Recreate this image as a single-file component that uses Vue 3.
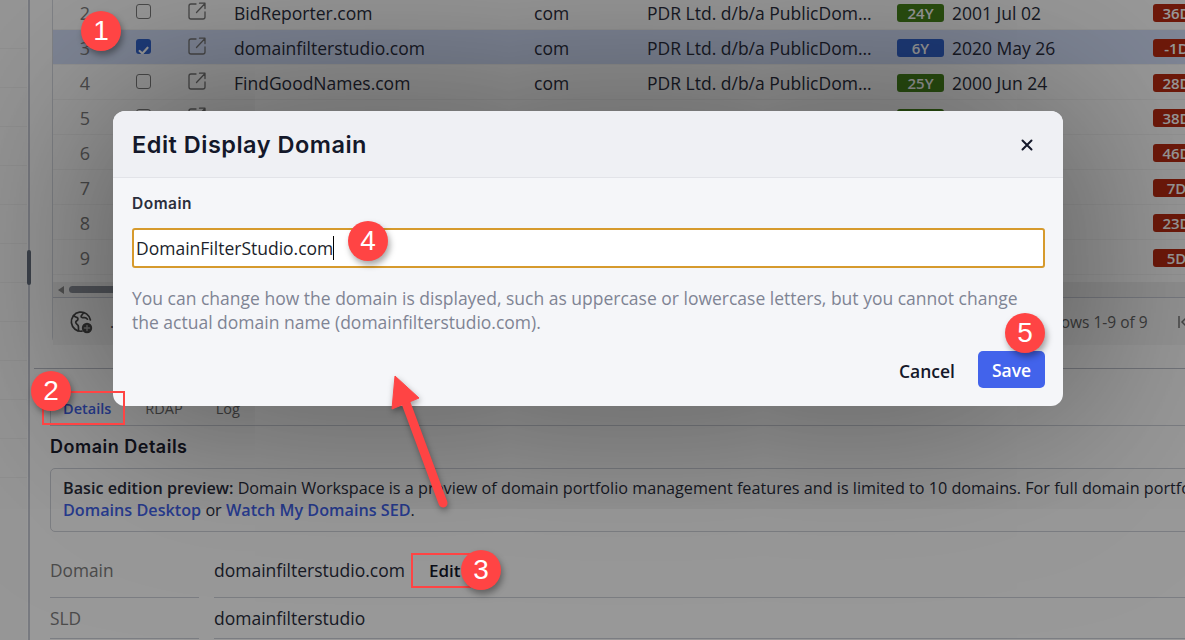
<script setup>
const rows = [
  { n: 2, name: 'BidReporter.com', tld: 'com', reg: 'PDR Ltd. d/b/a PublicDom...', age: '24Y', date: '2001 Jul 02', left: '36D' },
  { n: 3, name: 'domainfilterstudio.com', tld: 'com', reg: 'PDR Ltd. d/b/a PublicDom...', age: '6Y', date: '2020 May 26', left: '-1D', selected: true },
  { n: 4, name: 'FindGoodNames.com', tld: 'com', reg: 'PDR Ltd. d/b/a PublicDom...', age: '25Y', date: '2000 Jun 24', left: '28D' },
  { n: 5, age: '24Y', left: '38D' },
  { n: 6, age: '24Y', left: '46D' },
  { n: 7, age: '24Y', left: '7D' },
  { n: 8, age: '24Y', left: '23D' },
  { n: 9, age: '24Y', left: '5D' }
]

// numbered callouts drawn over the screenshot
const callouts = [
  { n: 1, x: 101, y: 31 },
  { n: 2, x: 51, y: 391 },
  { n: 3, x: 481, y: 570 },
  { n: 4, x: 368, y: 241 },
  { n: 5, x: 1025, y: 333 }
]
</script>

<template>
  <div class="page">
    <aside class="rail">
      <div class="rail-line" v-for="i in 12" :key="i"></div>
    </aside>
    <div class="rail-scroll"><span class="rail-thumb"></span></div>

    <main class="content">
      <section class="grid-card">
        <div class="row" v-for="r in rows" :key="r.n" :class="{ selected: r.selected }">
          <span class="num">{{ r.n }}</span>
          <span class="check-cell">
            <span class="check" :class="{ on: r.selected }">
              <svg v-if="r.selected" viewBox="0 0 14 14" width="15" height="15">
                <path d="M3.400 7.400 6 9.800l4.800-5.400" fill="none" stroke="#fff" stroke-width="2" stroke-linecap="round" stroke-linejoin="round" />
              </svg>
            </span>
          </span>
          <span class="link-cell">
            <svg viewBox="0 0 18 18" width="18" height="18" fill="none" stroke="#777" stroke-width="1.300" stroke-linecap="round" stroke-linejoin="round">
              <path d="M8 2H3a2 2 0 0 0-2 2v11a2 2 0 0 0 2 2h12a2 2 0 0 0 2-2v-5" />
              <path d="M8.500 10.500 17 1.500M11.500 1.200H17v5.400" />
            </svg>
          </span>
          <span class="cell">{{ r.name }}</span>
          <span class="cell">{{ r.tld }}</span>
          <span class="cell">{{ r.reg }}</span>
          <span class="age-cell"><span class="badge" :class="r.selected ? 'blue' : 'green'">{{ r.age }}</span></span>
          <span class="cell">{{ r.date }}</span>
          <span class="left-cell"><span class="badge red">{{ r.left }}</span></span>
        </div>
        <div class="hscroll">
          <span class="hscroll-arrow"></span>
          <span class="hscroll-thumb"></span>
        </div>
        <div class="grid-footer">
          <svg class="globe" viewBox="0 0 24 24" width="24" height="24" fill="none" stroke="#4a4a4a" stroke-width="1.700" stroke-linecap="round" stroke-linejoin="round">
            <path d="M13 21.200A9.600 9.600 0 1 1 21.400 10" />
            <path d="M4.500 5.500c1.500 1 2 1.600 3.200 1.800 1.400.3 1.400 1.600 1 2.600-.4 1-2 1-2 2.400 0 1.400 1.600 2 2.400 3.200.6 1 .4 3 .4 5" />
            <path d="M14.500 2.800c-.6 1.600-2.200 2-2.400 3.400-.2 1.400 1.600 1.600 3 1.400 1.400-.2 2.400.4 3.400 1.600" />
            <circle cx="18" cy="18" r="5.200" fill="#4a4a4a" stroke="none" />
            <path d="M18 15.400v5.200M15.400 18h5.200" stroke="#aaa" stroke-width="1.400" />
          </svg>
          <span class="foot-dot">.</span>
          <span class="foot-rows">Rows 1-9 of 9</span>
          <svg class="foot-first" viewBox="0 0 12 14" width="12" height="14" fill="none" stroke="#777" stroke-width="1.500">
            <path d="M1 1v12M10 1 4 7l6 6" />
          </svg>
        </div>
      </section>

      <section class="lower">
        <nav class="tabs">
          <span class="tab active">Details</span>
          <span class="tab">RDAP</span>
          <span class="tab">Log</span>
        </nav>
        <h2 class="details-title">Domain Details</h2>
        <div class="notice">
          <p><b>Basic edition preview:</b> Domain Workspace is a preview of domain portfolio management features and is limited to 10 domains. For full domain portfolio management, use</p>
          <p><a>Domains Desktop</a> or <a>Watch My Domains SED</a>.</p>
        </div>
        <div class="field first">
          <span class="field-label">Domain</span>
          <span class="field-value">domainfilterstudio.com<span class="edit-btn">Edit</span></span>
        </div>
        <div class="field">
          <span class="field-label">SLD</span>
          <span class="field-value">domainfilterstudio</span>
        </div>
      </section>
    </main>

    <div class="backdrop"></div>

    <div class="modal">
      <header class="modal-head">
        <h1>Edit Display Domain</h1>
        <svg viewBox="0 0 12 12" width="12" height="12" fill="none" stroke="#14182a" stroke-width="2" stroke-linecap="round">
          <path d="M1.500 1.500l9 9M10.500 1.500l-9 9" />
        </svg>
      </header>
      <div class="modal-body">
        <label class="input-label">Domain</label>
        <div class="input"><span>DomainFilterStudio.com</span><i class="caret"></i></div>
        <p class="help">You can change how the domain is displayed, such as uppercase or lowercase letters, but you cannot change the actual domain name (domainfilterstudio.com).</p>
        <div class="actions">
          <button class="cancel">Cancel</button>
          <button class="save">Save</button>
        </div>
      </div>
    </div>

    <span class="mark mark-tab"></span>
    <span class="mark mark-edit"></span>
    <svg class="arrow" viewBox="0 0 1185 640" width="1185" height="640">
      <path d="M406 403 L443 503" stroke="#ff4444" stroke-width="9" stroke-linecap="round" />
      <path d="M395 376 L419 398 L392 409 Z" fill="#ff4444" stroke="#ff4444" stroke-width="1" stroke-linejoin="round" />
    </svg>
    <span
      v-for="c in callouts"
      :key="c.n"
      class="callout"
      :style="{ left: c.x - 20 + 'px', top: c.y - 20 + 'px' }"
    >{{ c.n }}</span>
  </div>
</template>

<style>
body {
  margin: 0;
  overflow: hidden;
}
</style>

<style scoped>
.page {
  position: relative;
  display: flex;
  width: 1185px;
  height: 640px;
  overflow: hidden;
  background: #fff;
  color: #2a2e3d;
  font-family: "Open Sans", "Liberation Sans", sans-serif;
  font-size: 18px;
}

.rail {
  flex: 0 0 27px;
  padding-top: 48px;
  background: #fafafa;
}

.rail-line {
  height: 1px;
  margin-bottom: 38px;
  background: #f0f0f0;
}

.rail-scroll {
  flex: 0 0 4px;
  padding-top: 250px;
  background: linear-gradient(90deg, #fff 1px, #c9ccd6 1px, #c9ccd6 3px, #fff 3px);
}

.rail-thumb {
  display: block;
  width: 4px;
  height: 35px;
  border-radius: 2px;
  background: #67707f;
}

.content {
  flex: 1;
  min-width: 0;
}

.grid-card {
  box-sizing: border-box;
  height: 351px;
  width: 1300px;
  margin: -6px 0 0 21px;
  border: 1px solid #d8dbe2;
  border-radius: 0 0 8px 8px;
}

.row {
  display: grid;
  grid-template-columns: 64px 53px 54px 300px 113px 250px 55px 201px 1fr;
  align-items: center;
  box-sizing: border-box;
  height: 35px;
  padding-top: 1px;
  border-bottom: 1px solid #f6f6f6;
  white-space: nowrap;
}

.row.selected {
  background: #d4dffb;
}

.num {
  text-align: center;
  color: #7d7d7d;
}

.check-cell,
.link-cell {
  display: flex;
  justify-content: center;
}

.link-cell {
  padding-bottom: 4px;
}

.check {
  display: block;
  box-sizing: border-box;
  width: 15px;
  height: 15px;
  margin-bottom: 3px;
  border: 1.5px solid #7e7e7e;
  border-radius: 3px;
  overflow: hidden;
}

.check.on {
  border: 0;
  background: #3264cd;
}

.cell {
  padding-left: 10px;
  font-size: 17.500px;
}

.age-cell,
.left-cell {
  padding-left: 10px;
}

.badge {
  display: block;
  width: 47px;
  height: 18px;
  border-radius: 3px;
  color: #fff;
  font-size: 15px;
  font-weight: 600;
  line-height: 18px;
  text-align: center;
}

.green {
  background: #46841b;
}

.blue {
  background: #3264cd;
}

.red {
  background: #b92b11;
}

.hscroll {
  display: flex;
  align-items: center;
  gap: 5px;
  height: 15px;
  margin-top: 7px;
  padding-left: 5px;
  border-bottom: 1px solid #c9ccd6;
  background: #f0f0f0;
}

.hscroll-arrow {
  border: 4px solid transparent;
  border-right: 6px solid #8a8a8a;
  border-left: 0;
}

.hscroll-thumb {
  width: 600px;
  height: 7px;
  border-radius: 4px;
  background: #8a8f99;
}

.grid-footer {
  display: flex;
  align-items: center;
  height: 47px;
  padding-left: 16px;
  background: #f7f7f7;
  font-size: 15.500px;
  color: #666;
}

.globe {
  flex-shrink: 0;
}

.foot-dot {
  margin-left: 17px;
  color: #444;
}

.foot-rows {
  margin-left: 937px;
  white-space: nowrap;
}

.foot-first {
  flex-shrink: 0;
  margin-left: 30px;
}

.lower {
  margin: 23px 0 0 3px;
  padding-left: 16px;
  border-top: 1px solid #bfc2cc;
  white-space: nowrap;
}

.tabs {
  display: flex;
  height: 33px;
  margin-top: 23px;
  border-bottom: 1px solid #cfd2da;
  font-size: 14.500px;
  color: #6e6e6e;
}

.tab {
  margin-right: 33px;
  line-height: 34px;
}

.tab.active {
  box-sizing: border-box;
  height: 34px;
  margin-right: 22px;
  padding: 0 12px;
  border-left: 1px solid #cfd2da;
  color: #4263eb;
  font-weight: 600;
}

.details-title {
  margin: 10px 0 11px;
  font-family: Inter, "Open Sans", sans-serif;
  font-size: 18px;
  font-weight: 600;
  letter-spacing: 0.5px;
  line-height: 21px;
  color: #1c2030;
}

.notice {
  box-sizing: border-box;
  width: 1300px;
  height: 64px;
  padding: 8px 12px;
  border: 1px solid #cfd2da;
  border-radius: 5px;
  font-size: 16.200px;
  line-height: 22px;
}

.notice p {
  margin: 0;
}

.notice b {
  font-weight: 600;
}

.notice a {
  color: #4263eb;
  font-weight: 600;
}

.field {
  display: flex;
  gap: 15px;
  width: 1300px;
  height: 41px;
  font-size: 17.500px;
}

.field.first {
  height: 66px;
}

.field-label,
.field-value {
  box-sizing: border-box;
  display: flex;
  align-items: center;
  border-bottom: 1px solid #cfd2da;
}

.first .field-label,
.first .field-value {
  padding-top: 11px;
}

.field-label {
  flex: 0 0 149px;
  font-size: 17.300px;
  color: #7d7d7d;
}

.field-value {
  flex: 1;
}

.edit-btn {
  margin-left: 24px;
  font-size: 17px;
  font-weight: 600;
  color: #14182a;
}

.backdrop {
  position: absolute;
  inset: 0;
  background: rgba(0, 0, 0, 0.4);
}

.modal {
  position: absolute;
  left: 113px;
  top: 111px;
  width: 950px;
  height: 295px;
  border-radius: 12px;
  overflow: hidden;
  background: #f5f6f9;
  box-shadow: 0 0 200px rgba(0, 0, 0, 0.55);
}

.modal-head {
  display: flex;
  align-items: center;
  justify-content: space-between;
  box-sizing: border-box;
  height: 67px;
  padding: 2px 30px 0 19px;
  border-bottom: 1px solid #e2e3e8;
  background: #eff0f4;
}

.modal-head h1 {
  margin: 0 0 2px;
  font-family: Inter, "Open Sans", sans-serif;
  font-size: 23.500px;
  font-weight: 600;
  letter-spacing: 0.5px;
  color: #14182a;
}

.modal-body {
  padding: 16px 18px 0 19px;
}

.input-label {
  display: block;
  font-family: Inter, "Open Sans", sans-serif;
  font-size: 15.500px;
  font-weight: 600;
  letter-spacing: 0.5px;
  line-height: 20px;
  color: #2b2e3c;
}

.input {
  display: flex;
  align-items: center;
  box-sizing: border-box;
  height: 40px;
  margin-top: 14px;
  padding-left: 2px;
  border: 2px solid #d69a2d;
  border-radius: 3px;
  background: #fff;
  font-size: 17.500px;
  color: #1c1f2c;
}

.caret {
  width: 1px;
  height: 24px;
  background: #000;
}

.help {
  margin: 18px 0 0;
  width: 900px;
  font-size: 17.500px;
  line-height: 24px;
  color: #7f8494;
}

.actions {
  display: flex;
  justify-content: flex-end;
  align-items: center;
  gap: 23px;
  margin-top: 17px;
}

.actions button {
  border: 0;
  font-family: inherit;
  font-size: 17.500px;
  font-weight: 600;
}

.cancel {
  padding: 2px 0 0;
  background: none;
  color: #14182a;
}

.save {
  width: 67px;
  height: 37px;
  padding: 1px 0 0;
  border-radius: 5px;
  background: #4263eb;
  color: #fff;
}

.mark {
  position: absolute;
  box-sizing: border-box;
  border: 2px solid #ff4444;
}

.mark-tab {
  left: 42px;
  top: 391px;
  width: 83px;
  height: 34px;
}

.mark-edit {
  left: 411px;
  top: 553px;
  width: 60px;
  height: 35px;
}

.arrow {
  position: absolute;
  left: 0;
  top: 0;
  filter: drop-shadow(1px 3px 3px rgba(0, 0, 0, 0.35));
}

.callout {
  position: absolute;
  width: 40px;
  height: 40px;
  border-radius: 50%;
  background: #ff4444;
  box-shadow: 2px 4px 6px rgba(0, 0, 0, 0.35);
  color: #fff;
  font-family: "Liberation Sans", Arial, sans-serif;
  font-size: 28px;
  line-height: 40px;
  text-align: center;
}
</style>
